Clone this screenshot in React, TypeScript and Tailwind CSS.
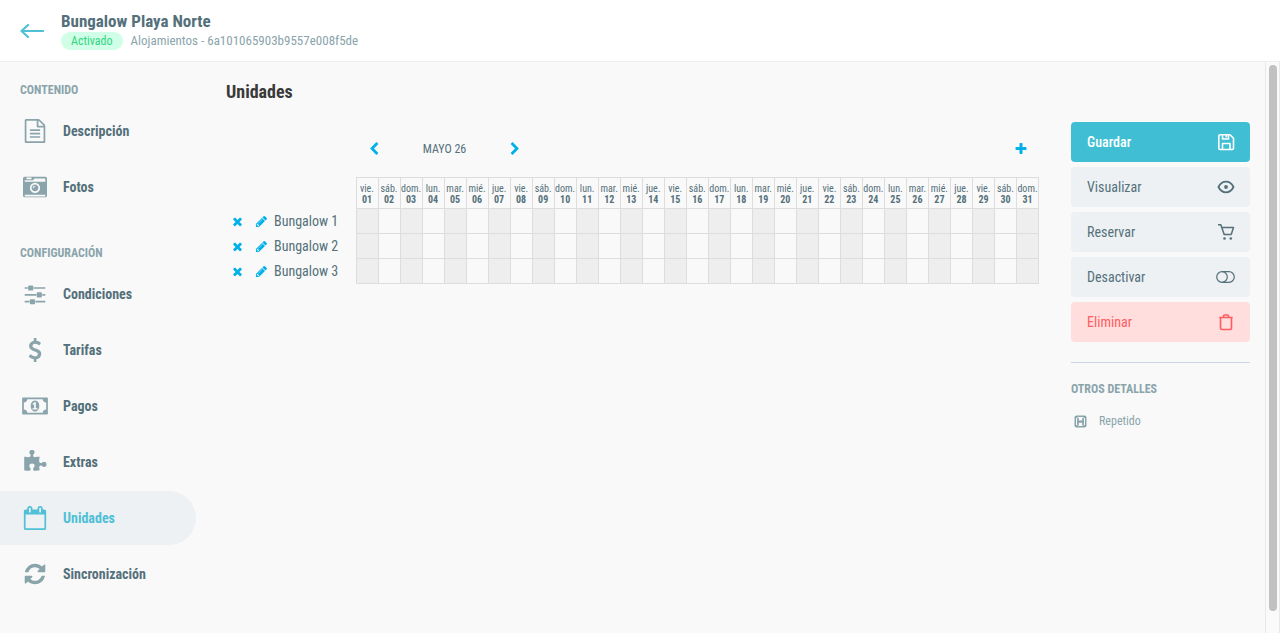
import type { ReactNode } from 'react'

const DAY_NAMES = ['vie.', 'sáb.', 'dom.', 'lun.', 'mar.', 'mié.', 'jue.']

const DAYS = Array.from({ length: 31 }, (_, i) => ({
  name: DAY_NAMES[i % 7],
  number: String(i + 1).padStart(2, '0'),
}))

const UNITS = ['Bungalow 1', 'Bungalow 2', 'Bungalow 3']

const ICONS = {
  file: 'M1596 380q28 28 48 76t20 88v1152q0 40-28 68t-68 28h-1344q-40 0-68-28t-28-68v-1600q0-40 28-68t68-28h896q40 0 88 20t76 48zM1152 136v376h376q-10-29-22-41l-313-313q-12-12-41-22zM1536 1664v-1024h-416q-40 0-68-28t-28-68v-416h-768v1536h1280zM512 800q0-14 9-23t23-9h704q14 0 23 9t9 23v64q0 14-9 23t-23 9h-704q-14 0-23-9t-9-23v-64zM1248 1024q14 0 23 9t9 23v64q0 14-9 23t-23 9h-704q-14 0-23-9t-9-23v-64q0-14 9-23t23-9h704zM1248 1280q14 0 23 9t9 23v64q0 14-9 23t-23 9h-704q-14 0-23-9t-9-23v-64q0-14 9-23t23-9h704z',
  camera:
    'M928 832q0-14-9-23t-23-9q-66 0-113 47t-47 113q0 14 9 23t23 9 23-9 9-23q0-40 28-68t68-28q14 0 23-9t9-23zM1152 962q0 106-75 181t-181 75-181-75-75-181 75-181 181-75 181 75 75 181zM128 1600h1536v-128h-1536v128zM1280 962q0-159-112.5-271.5t-271.5-112.5-271.5 112.5-112.5 271.5 112.5 271.5 271.5 112.5 271.5-112.5 112.5-271.5zM256 320h384v-128h-384v128zM128 512h1536v-256h-828l-64 128h-644v128zM1792 256v1280q0 53-37.5 90.5t-90.5 37.5h-1536q-53 0-90.5-37.5t-37.5-90.5v-1280q0-53 37.5-90.5t90.5-37.5h1536q53 0 90.5 37.5t37.5 90.5z',
  sliders:
    'M480 1408v128h-352v-128h352zM832 1280q26 0 45 19t19 45v256q0 26-19 45t-45 19h-256q-26 0-45-19t-19-45v-256q0-26 19-45t45-19h256zM992 896v128h-864v-128h864zM352 384v128h-224v-128h224zM1664 1408v128h-736v-128h736zM704 256q26 0 45 19t19 45v256q0 26-19 45t-45 19h-256q-26 0-45-19t-19-45v-256q0-26 19-45t45-19h256zM1344 768q26 0 45 19t19 45v256q0 26-19 45t-45 19h-256q-26 0-45-19t-19-45v-256q0-26 19-45t45-19h256zM1664 896v128h-224v-128h224zM1664 384v128h-864v-128h864z',
  dollar:
    'M1362 1185q0 153-99.5 263.5t-258.5 136.5v175q0 14-9 23t-23 9h-135q-13 0-22.5-9.5t-9.5-22.5v-175q-66-9-127.5-31t-101.5-44.5-74-48-46.5-37.5-17.5-18q-17-21-2-41l103-135q7-10 23-12 15-2 24 9l2 2q113 99 243 125 37 8 74 8 81 0 142.5-43t61.5-122q0-28-15-53t-33.5-42-58.5-37.5-66-32-80-32.5q-39-16-61.5-25t-61.5-26.5-62.5-31-56.5-35.5-53.5-42.5-43.5-49-35.5-58-21-66.5-8.5-78q0-138 98-242t255-134v-180q0-13 9.5-22.5t22.5-9.5h135q14 0 23 9t9 23v176q57 6 110.5 23t87 33.5 63.5 37.5 39 29 15 14q17 18 5 38l-81 146q-8 15-23 16-14 3-27-7-3-3-14.5-12t-39-26.5-58.5-32-74.5-26-85.5-11.5q-95 0-155 43t-60 111q0 26 8.5 48t29.5 41.5 39.5 33 56 31 60.5 27 70 27.5q53 20 81 31.5t76 35 75.5 42.5 62 50 53 63.5 31.5 76.5 13 94z',
  money:
    'M768 1152h384v-96h-128v-448h-114l-148 137 77 80q42-37 55-57h2v288h-128v96zM1280 896q0 70-21 142t-59.5 134-101.5 101-138 39-138-39-101.5-101-59.5-134-21-142 21-142 59.5-134 101.5-101 138-39 138 39 101.5 101 59.5 134 21 142zM1792 1152v-512q-106 0-181-75t-75-181h-1152q0 106-75 181t-181 75v512q106 0 181 75t75 181h1152q0-106 75-181t181-75zM1920 320v1152q0 26-19 45t-45 19h-1792q-26 0-45-19t-19-45v-1152q0-26 19-45t45-19h1792q26 0 45 19t19 45z',
  puzzle:
    'M1755 1083q0 81-44.5 135t-123.5 54q-41 0-77.5-17.5t-59-38-56.5-38-71-17.5q-110 0-110 124 0 39 16 115t15 115v5q-22 0-33 1-34 3-97.5 11.5t-115.5 13.5-98 5q-61 0-103-26.5t-42-83.5q0-37 17.5-71t38-56.5 38-59 17.5-77.5q0-79-54-123.5t-135-44.5q-84 0-143 45.5t-59 127.5q0 43 15 83t33.5 64.5 33.5 53 15 50.5q0 45-46 89-37 35-117 35-95 0-245-24-9-2-27.5-4t-27.5-4l-13-2q-1 0-3-1-2 0-2-1v-1024q2 1 17.5 3.5t34 5 21.5 3.5q150 24 245 24 80 0 117-35 46-44 46-89 0-22-15-50.5t-33.5-53-33.5-64.5-15-83q0-82 59-127.5t144-45.5q80 0 134 44.5t54 123.5q0 41-17.5 77.5t-38 59-38 56.5-17.5 71q0 57 42 83.5t103 26.5q64 0 180-15t163-17v2q-1 2-3.5 17.5t-5 34-3.5 21.5q-24 150-24 245 0 80 35 117 44 46 89 46 22 0 50.5-15t53-33.5 64.5-33.5 83-15q82 0 127.5 59t45.5 143z',
  calendar:
    'M192 1664h1408v-1024h-1408v1024zM576 448v-288q0-14-9-23t-23-9h-64q-14 0-23 9t-9 23v288q0 14 9 23t23 9h64q14 0 23-9t9-23zM1344 448v-288q0-14-9-23t-23-9h-64q-14 0-23 9t-9 23v288q0 14 9 23t23 9h64q14 0 23-9t9-23zM1728 384v1280q0 52-38 90t-90 38h-1408q-52 0-90-38t-38-90v-1280q0-52 38-90t90-38h128v-96q0-66 47-113t113-47h64q66 0 113 47t47 113v96h384v-96q0-66 47-113t113-47h64q66 0 113 47t47 113v96h128q52 0 90 38t38 90z',
  refresh:
    'M1639 1056q0 5-1 7-64 268-268 434.5t-478 166.5q-146 0-282.5-55t-243.5-157l-129 129q-19 19-45 19t-45-19-19-45v-448q0-26 19-45t45-19h448q26 0 45 19t19 45-19 45l-137 137q71 66 161 102t187 36q134 0 250-65t186-179q11-17 53-117 8-23 30-23h192q13 0 22.5 9.5t9.5 22.5zM1664 256v448q0 26-19 45t-45 19h-448q-26 0-45-19t-19-45 19-45l138-138q-148-137-349-137-134 0-250 65t-186 179q-11 17-53 117-8 23-30 23h-199q-13 0-22.5-9.5t-9.5-22.5v-7q65-268 270-434.5t480-166.5q146 0 284 55.5t245 156.5l130-129q19-19 45-19t45 19 19 45z',
  times:
    'M1490 1322q0 40-28 68l-136 136q-28 28-68 28t-68-28l-294-294-294 294q-28 28-68 28t-68-28l-136-136q-28-28-28-68t28-68l294-294-294-294q-28-28-28-68t28-68l136-136q28-28 68-28t68 28l294 294 294-294q28-28 68-28t68 28l136 136q28 28 28 68t-28 68l-294 294 294 294q28 28 28 68z',
  pencil:
    'M491 1536l91-91-235-235-91 91v107h128v128h107zM1014 608q0-22-22-22-10 0-17 7l-542 542q-7 7-7 17 0 22 22 22 10 0 17-7l542-542q7-7 7-17zM960 416l416 416-832 832h-416v-416zM1643 512q0 53-37 90l-166 166-416-416 166-165q36-38 90-38 53 0 91 38l235 234q37 39 37 91z',
  plus: 'M1600 736v192q0 40-28 68t-68 28h-416v416q0 40-28 68t-68 28h-192q-40 0-68-28t-28-68v-416h-416q-40 0-68-28t-28-68v-192q0-40 28-68t68-28h416v-416q0-40 28-68t68-28h192q40 0 68 28t28 68v416h416q40 0 68 28t28 68z',
  left: 'M1427 301l-531 531 531 531q19 19 19 45t-19 45l-166 166q-19 19-45 19t-45-19l-742-742q-19-19-19-45t19-45l742-742q19-19 45-19t45 19l166 166q19 19 19 45t-19 45z',
  right:
    'M1363 877l-742 742q-19 19-45 19t-45-19l-166-166q-19-19-19-45t19-45l531-531-531-531q-19-19-19-45t19-45l166-166q19-19 45-19t45 19l742 742q19 19 19 45t-19 45z',
}

type IconName = keyof typeof ICONS

function Icon({ name, className }: { name: IconName; className: string }) {
  return (
    <svg
      viewBox={name === 'money' ? '0 0 1920 1792' : '0 0 1792 1792'}
      className={className}
      fill="currentColor"
      aria-hidden="true"
    >
      <path d={ICONS[name]} />
    </svg>
  )
}

function NavItem({ icon, label, active }: { icon: IconName; label: string; active?: boolean }) {
  return (
    <li>
      <a
        href="#"
        aria-current={active ? 'page' : undefined}
        className={
          active
            ? 'flex h-[54px] items-center rounded-r-full bg-[#edf1f4] pl-5 text-[#4fc0d5]'
            : 'flex h-[54px] items-center pl-5 text-[#54707a]'
        }
      >
        <span
          className={
            active ? 'flex w-[30px] justify-center' : 'flex w-[30px] justify-center text-[#8aa4ab]'
          }
        >
          <Icon name={icon} className={icon === 'money' ? 'h-6 w-[26px]' : 'size-6'} />
        </span>
        <span className="ml-[13px] text-[14px] leading-5 font-bold">{label}</span>
      </a>
    </li>
  )
}

function SectionTitle({ children }: { children: ReactNode }) {
  return <h2 className="text-[12px] leading-4 font-bold text-[#8aa4ab]">{children}</h2>
}

function ActionButton({
  label,
  tone,
  children,
}: {
  label: string
  tone: string
  children: ReactNode
}) {
  return (
    <button
      type="button"
      className={`flex h-10 w-full items-center justify-between rounded pr-[14px] pl-4 text-[14px] leading-5 ${tone}`}
    >
      {label}
      <svg
        viewBox="0 0 20 20"
        className="size-5"
        fill="none"
        stroke="currentColor"
        strokeWidth="1.6"
        strokeLinejoin="round"
        aria-hidden="true"
      >
        {children}
      </svg>
    </button>
  )
}

export default function App() {
  return (
    <div className="flex h-screen flex-col bg-[#f9f9f9] font-['Roboto_Condensed','Liberation_Sans_Narrow',Roboto,sans-serif] text-[#54707a]">
      <header className="flex h-[62px] shrink-0 items-center border-b border-[#eee] bg-white px-5">
        <a href="#" aria-label="Volver">
          <svg
            viewBox="0 0 24 16"
            className="h-4 w-6"
            fill="none"
            stroke="#4fc0d5"
            strokeWidth="2.2"
            strokeLinecap="round"
            strokeLinejoin="round"
            aria-hidden="true"
          >
            <path d="M2 8h21M8 2L1.500 8l6.500 6" />
          </svg>
        </a>
        <div className="ml-[17px]">
          <h1 className="text-[17px] leading-5 font-bold">Bungalow Playa Norte</h1>
          <div className="mt-px flex items-center gap-2 text-[#8aa4ab]">
            <span className="rounded-full bg-[#d0fee6] px-[10px] text-[12px] leading-[18px] text-[#2fd583]">
              Activado
            </span>
            <span className="text-[13px] leading-[18px]">
              Alojamientos - 6a101065903b9557e008f5de
            </span>
          </div>
        </div>
      </header>

      <div className="flex min-h-0 flex-1">
        <div className="flex min-w-0 flex-1 overflow-hidden">
          <nav className="w-[196px] shrink-0 pt-5">
            <div className="pl-5">
              <SectionTitle>CONTENIDO</SectionTitle>
            </div>
            <ul className="mt-[6px] flex flex-col gap-[2px]">
              <NavItem icon="file" label="Descripción" />
              <NavItem icon="camera" label="Fotos" />
            </ul>
            <div className="mt-[31px] pl-5">
              <SectionTitle>CONFIGURACIÓN</SectionTitle>
            </div>
            <ul className="mt-[6px] flex flex-col gap-[2px]">
              <NavItem icon="sliders" label="Condiciones" />
              <NavItem icon="dollar" label="Tarifas" />
              <NavItem icon="money" label="Pagos" />
              <NavItem icon="puzzle" label="Extras" />
              <NavItem icon="calendar" label="Unidades" active />
              <NavItem icon="refresh" label="Sincronización" />
            </ul>
          </nav>

          <main className="min-w-0 flex-1 pt-[18px] pl-[30px]">
            <h2 className="text-[18px] leading-6 font-bold text-[#3a3a3a]">Unidades</h2>

            <div className="mt-[33px] flex h-6 items-center justify-between pr-[11px] pl-[141px]">
              <div className="flex w-[155px] items-center justify-between">
                <button type="button" aria-label="Mes anterior" className="text-[#00b0eb]">
                  <Icon name="left" className="size-[14px]" />
                </button>
                <span className="text-[12px] leading-4">MAYO 26</span>
                <button type="button" aria-label="Mes siguiente" className="text-[#00b0eb]">
                  <Icon name="right" className="size-[14px]" />
                </button>
              </div>
              <button type="button" aria-label="Añadir unidad" className="text-[#00b0eb]">
                <Icon name="plus" className="size-[14px]" />
              </button>
            </div>

            <table className="mt-4 w-full table-fixed border-collapse">
              <thead>
                <tr className="h-[31px]">
                  <td className="w-[130px]" />
                  {DAYS.map((day) => (
                    <th
                      key={day.number}
                      scope="col"
                      className="border border-[#ddd] p-0 pt-px text-center text-[10px] leading-[11px] font-normal"
                    >
                      <span className="flex flex-col items-center">
                        {day.name}
                        <b>{day.number}</b>
                      </span>
                    </th>
                  ))}
                </tr>
              </thead>
              <tbody>
                {UNITS.map((unit) => (
                  <tr key={unit} className="h-[25px]">
                    <th scope="row" className="p-0 text-left text-[14px] leading-5 font-normal">
                      <span className="flex items-center pl-[5px]">
                        <button
                          type="button"
                          aria-label={`Eliminar ${unit}`}
                          className="text-[#00b0eb]"
                        >
                          <Icon name="times" className="size-[13px]" />
                        </button>
                        <button
                          type="button"
                          aria-label={`Editar ${unit}`}
                          className="mr-[6px] ml-[11px] text-[#00b0eb]"
                        >
                          <Icon name="pencil" className="size-[13px]" />
                        </button>
                        {unit}
                      </span>
                    </th>
                    {DAYS.map((day, i) => (
                      <td
                        key={day.number}
                        className={
                          i % 2 === 0
                            ? 'border border-[#ddd] bg-[#eee] p-0'
                            : 'border border-[#ddd] p-0'
                        }
                      />
                    ))}
                  </tr>
                ))}
              </tbody>
            </table>
          </main>

          <aside className="mr-[15px] ml-8 w-[179px] shrink-0 pt-[60px]">
            <div className="flex flex-col gap-[5px]">
              <ActionButton label="Guardar" tone="bg-[#40bfd4] text-white font-medium">
                <path d="M2.800 4A1.200 1.200 0 0 1 4 2.800h10l3.500 3.500V16.300a1.200 1.200 0 0 1-1.200 1.200H4a1.200 1.200 0 0 1-1.200-1.200zM6.500 3v4h6V3M6.500 17.500V11.500h7.500v6M10.300 3v2.500" />
              </ActionButton>
              <ActionButton label="Visualizar" tone="bg-[#edf1f4]">
                <path
                  strokeWidth="1.800"
                  d="M2.500 10C4.200 6.400 6.800 4.700 10 4.700s5.800 1.700 7.500 5.300c-1.700 3.600-4.300 5.300-7.500 5.300S4.200 13.600 2.500 10z"
                />
                <circle cx="10" cy="10" r="1.900" fill="currentColor" stroke="none" />
              </ActionButton>
              <ActionButton label="Reservar" tone="bg-[#edf1f4]">
                <path
                  strokeWidth="1.500"
                  d="M2 2.700h2.800l3.400 9.800h7.300M5.700 5.500h11.800l-2.200 6.800"
                />
                <circle cx="8.500" cy="16.500" r="1.300" fill="currentColor" stroke="none" />
                <circle cx="14.800" cy="16.500" r="1.300" fill="currentColor" stroke="none" />
              </ActionButton>
              <ActionButton label="Desactivar" tone="bg-[#edf1f4]">
                <g strokeWidth="1.200">
                  <rect x="0.700" y="4.700" width="17.600" height="10.600" rx="5.300" />
                  <path d="M6 4.700a5.300 5.300 0 0 1 0 10.600" />
                </g>
              </ActionButton>
              <ActionButton label="Eliminar" tone="bg-[#ffdedd] text-[#ff5c5f]">
                <path d="M3.300 5.500h13.400M4.500 5.500V16a1.500 1.500 0 0 0 1.500 1.500h8a1.500 1.500 0 0 0 1.500-1.500V5.500M7.500 5.500V4A1 1 0 0 1 8.500 3h3a1 1 0 0 1 1 1v1.500" />
              </ActionButton>
            </div>
            <div className="mt-5 border-t border-[#cbd5e6] pt-[18px]">
              <SectionTitle>OTROS DETALLES</SectionTitle>
              <a
                href="#"
                className="mt-4 flex items-center gap-3 pl-[3px] text-[12px] leading-4 text-[#8aa4ab]"
              >
                <svg viewBox="0 0 13 13" className="size-[13px]" aria-hidden="true">
                  <rect x="0.500" y="0.500" width="12" height="12" rx="2" fill="currentColor" />
                  <path d="M3.500 2h6v3.500h-6zM3.500 7.800h6V11h-6z" fill="#f9f9f9" />
                  <path d="M2.500 3v7M10.500 3v7" stroke="#f9f9f9" strokeWidth="1" />
                  <path d="M4 3v7.500M9 3v7.500" stroke="currentColor" strokeWidth="1.600" />
                </svg>
                Repetido
              </a>
            </div>
          </aside>
        </div>

        <div
          aria-hidden="true"
          className="w-[15px] shrink-0 border-x border-[#e8e8e8] bg-[#fafafa] px-[3px] py-[3px]"
        >
          <div className="h-[calc(100%-19px)] w-2 rounded-full bg-[#c1c1c1]" />
        </div>
      </div>
    </div>
  )
}
